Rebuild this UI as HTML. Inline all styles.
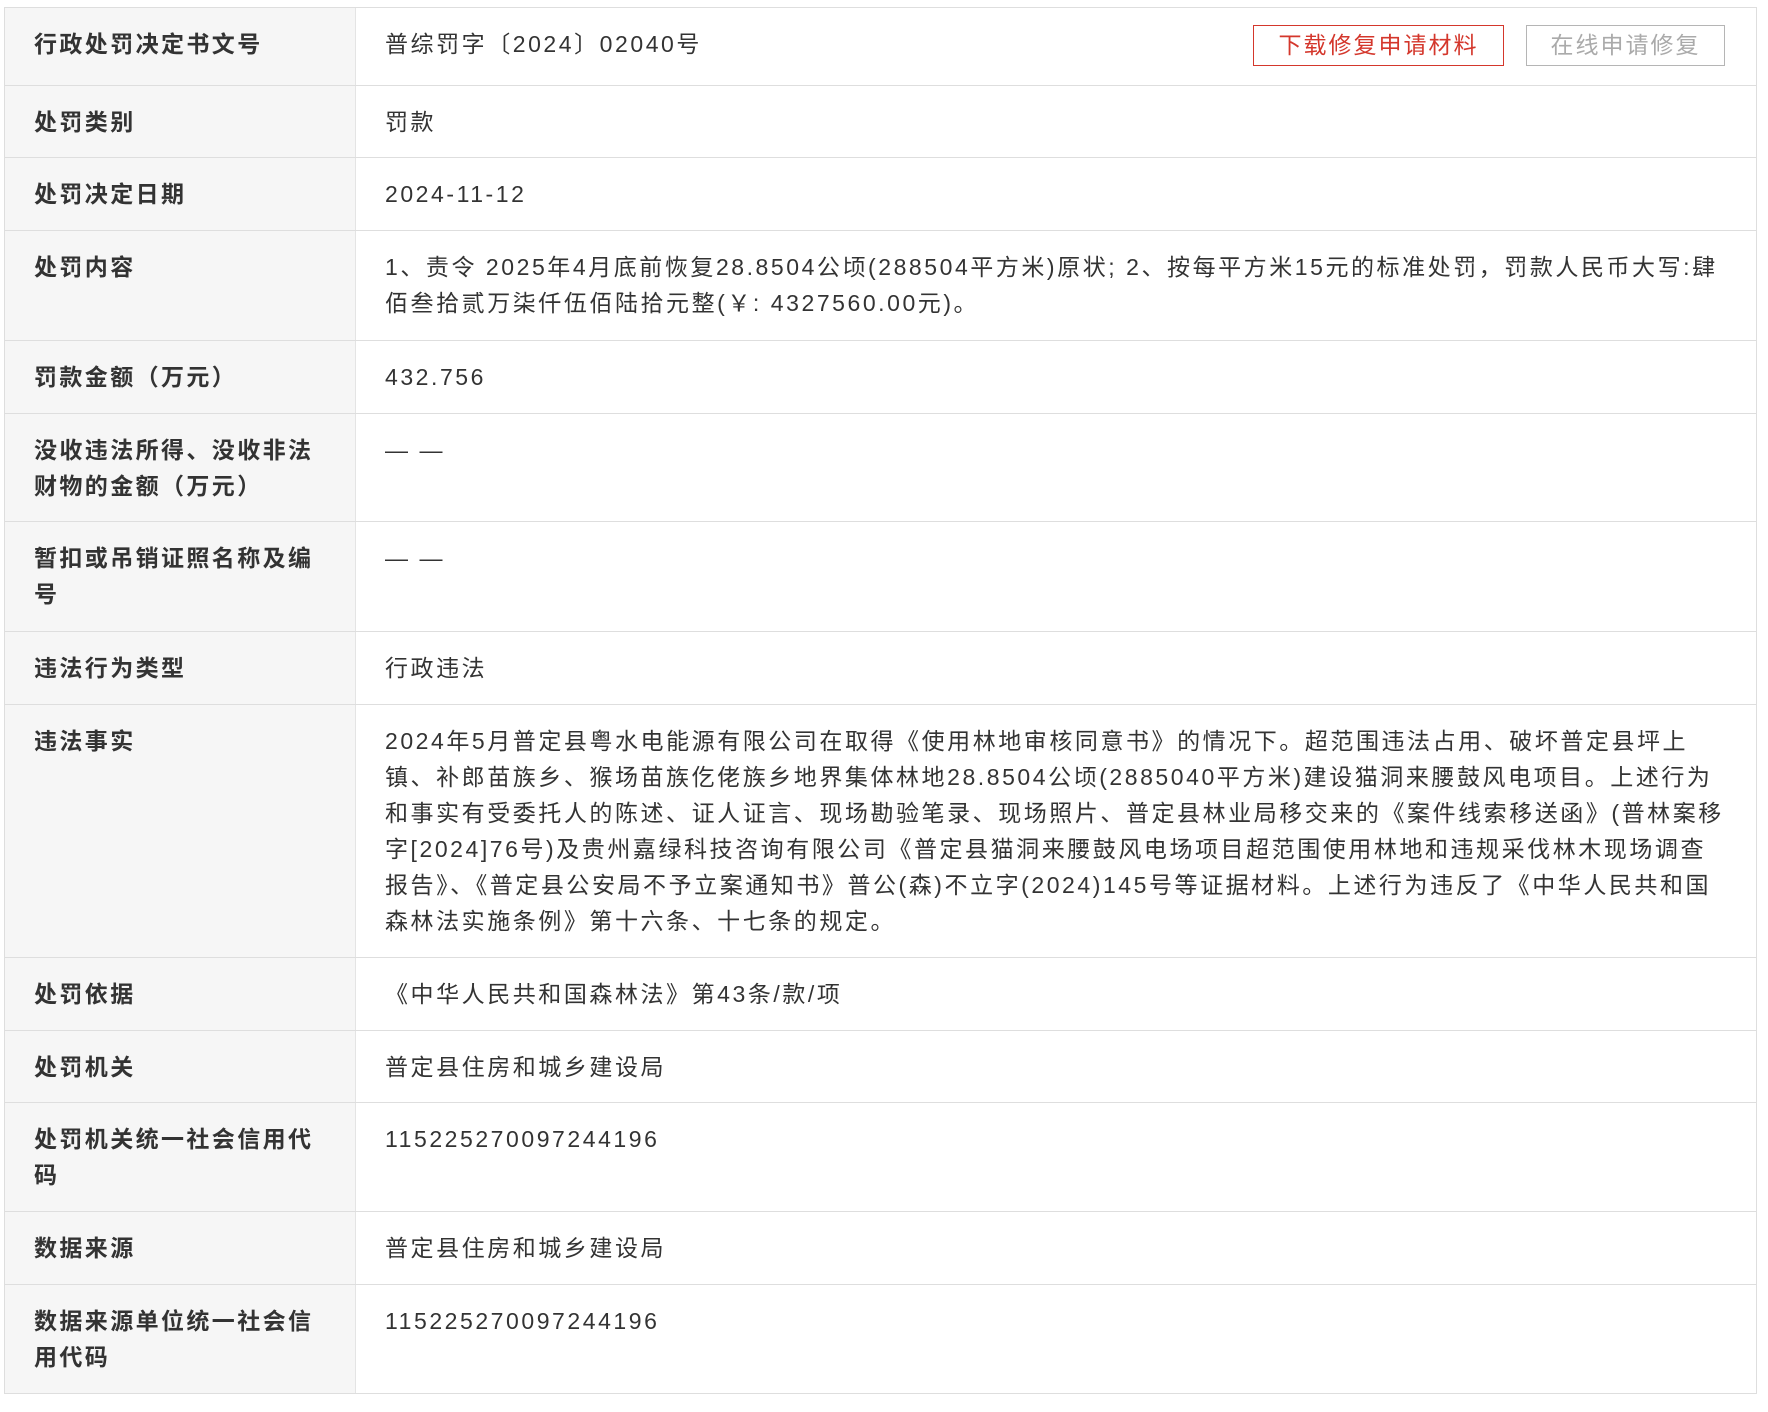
<!DOCTYPE html>
<html><head><meta charset="utf-8">
<style>
html,body{margin:0;padding:0;background:#fff;width:1768px;height:1412px;overflow:hidden}
body{font-family:"Liberation Sans","Noto Sans CJK SC",sans-serif;color:#333}
.t{position:absolute;left:4px;top:7px;width:1751px;border-top:1px solid #dedede;border-left:1px solid #dedede;border-right:1px solid #dedede}
.r{display:flex;border-bottom:1px solid #dedede;box-sizing:border-box}
.l{width:351px;flex:none;background:#f6f6f6;border-right:1px solid #e4e4e4;box-sizing:border-box;padding:18px 0 0 29px;font-weight:bold;font-size:23px;line-height:36px;letter-spacing:2.4px;color:#333}
.v{flex:1;padding:18px 0 0 29px;font-size:23px;line-height:36px;letter-spacing:2.55px;color:#333;white-space:nowrap;position:relative;background:#fff}
.b1{position:absolute;left:1253px;top:25px;width:249px;height:39px;border:1px solid #d4372c;color:#d4372c;font-size:23px;line-height:39px;text-align:center;letter-spacing:2px}
.b2{position:absolute;left:1526px;top:25px;width:197px;height:39px;border:1px solid #b5b5b5;color:#aaa;font-size:23px;line-height:39px;text-align:center;letter-spacing:2px}
</style></head><body>
<div class="t">
<div class="r" style="height:78px"><div class="l">行政处罚决定书文号</div><div class="v">普综罚字〔2024〕02040号</div></div>
<div class="r" style="height:72px"><div class="l">处罚类别</div><div class="v">罚款</div></div>
<div class="r" style="height:73px"><div class="l">处罚决定日期</div><div class="v">2024-11-12</div></div>
<div class="r" style="height:110px"><div class="l">处罚内容</div><div class="v">1、责令 2025年4月底前恢复28.8504公顷(288504平方米)原状; 2、按每平方米15元的标准处罚，罚款人民币大写:肆<br>佰叁拾贰万柒仟伍佰陆拾元整(￥: 4327560.00元)。</div></div>
<div class="r" style="height:73px"><div class="l">罚款金额（万元）</div><div class="v">432.756</div></div>
<div class="r" style="height:108px"><div class="l">没收违法所得、没收非法<br>财物的金额（万元）</div><div class="v">— —</div></div>
<div class="r" style="height:110px"><div class="l">暂扣或吊销证照名称及编<br>号</div><div class="v">— —</div></div>
<div class="r" style="height:73px"><div class="l">违法行为类型</div><div class="v">行政违法</div></div>
<div class="r" style="height:253px"><div class="l">违法事实</div><div class="v">2024年5月普定县粤水电能源有限公司在取得《使用林地审核同意书》的情况下。超范围违法占用、破坏普定县坪上<br>镇、补郎苗族乡、猴场苗族仡佬族乡地界集体林地28.8504公顷(2885040平方米)建设猫洞来腰鼓风电项目。上述行为<br>和事实有受委托人的陈述、证人证言、现场勘验笔录、现场照片、普定县林业局移交来的《案件线索移送函》(普林案移<br>字[2024]76号)及贵州嘉绿科技咨询有限公司《普定县猫洞来腰鼓风电场项目超范围使用林地和违规采伐林木现场调查<br>报告》、《普定县公安局不予立案通知书》普公(森)不立字(2024)145号等证据材料。上述行为违反了《中华人民共和国<br>森林法实施条例》第十六条、十七条的规定。</div></div>
<div class="r" style="height:73px"><div class="l">处罚依据</div><div class="v">《中华人民共和国森林法》第43条/款/项</div></div>
<div class="r" style="height:72px"><div class="l">处罚机关</div><div class="v">普定县住房和城乡建设局</div></div>
<div class="r" style="height:109px"><div class="l">处罚机关统一社会信用代<br>码</div><div class="v">115225270097244196</div></div>
<div class="r" style="height:73px"><div class="l">数据来源</div><div class="v">普定县住房和城乡建设局</div></div>
<div class="r" style="height:109px"><div class="l">数据来源单位统一社会信<br>用代码</div><div class="v">115225270097244196</div></div>
</div>
<div class="b1">下载修复申请材料</div>
<div class="b2">在线申请修复</div>
</body></html>
